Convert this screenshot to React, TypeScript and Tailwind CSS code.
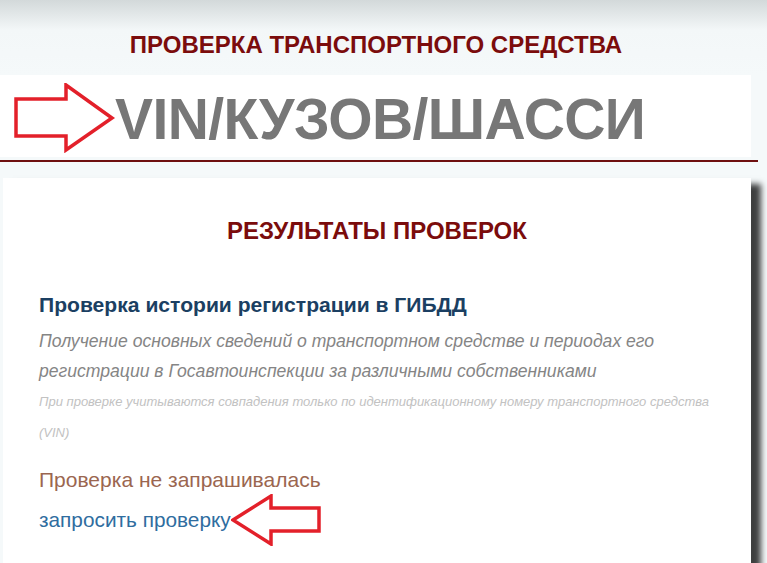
export default function App() {
  return (
    <div className="min-h-[563px] w-[767px] overflow-hidden bg-[#f5f9fa] font-['Liberation_Sans',Arial,sans-serif]">
      {/* шапка */}
      <div className="bg-gradient-to-b from-[#d3d9da] via-[#f3f7f8] via-40% to-[#f5f9fa] pt-[32px] pb-[18px] pr-[15px] text-center">
        <h1 className="text-[24px] font-bold leading-[25px] text-[#7b0c0c]">
          ПРОВЕРКА ТРАНСПОРТНОГО СРЕДСТВА
        </h1>
      </div>

      <div className="flex h-[82px] w-[751px] items-center bg-white">
        <svg width="118" height="70" viewBox="0 0 118 70" className="ml-[13px] mt-[4px] shrink-0">
          <polygon
            points="3,16 53,16 53,2 99,35 53,67 53,53 3,53"
            fill="none"
            stroke="#e3202a"
            strokeWidth="3.5"
            strokeLinejoin="miter"
          />
        </svg>
        <div className="-ml-[16px] mt-[6px] text-[57px] font-bold leading-none tracking-[-0.6px] text-[#777777]">
          VIN/КУЗОВ/ШАССИ
        </div>
      </div>
      <div className="mt-[3px] h-[2px] w-[758px] bg-[#6e1010]" />

      {/* карточка */}
      <div className="mt-[16px] ml-[3px] w-[748px] bg-white pb-[40px] shadow-[10px_6px_6px_rgba(0,0,0,0.75)]">
        <h2 className="pt-[40px] text-center text-[24px] font-bold leading-[26px] text-[#7b0c0c]">
          РЕЗУЛЬТАТЫ ПРОВЕРОК
        </h2>

        <div className="pl-[36px] pr-[20px] pt-[49px]">
          <h3 className="text-[21.1px] font-bold leading-[24px] text-[#1b3f62]">
            Проверка истории регистрации в ГИБДД
          </h3>
          <p className="mt-[9px] text-[17.6px] italic leading-[30px] text-[#858585]">
            Получение основных сведений о транспортном средстве и периодах его
            <br />
            регистрации в Госавтоинспекции за различными собственниками
          </p>
          <p className="whitespace-nowrap text-[13px] italic leading-[31px] text-[#c2c2c2]">
            При проверке учитываются совпадения только по идентификационному номеру транспортного средства
            <br />
            (VIN)
          </p>

          <div className="mt-[20px] text-[21px] leading-[24px] text-[#9b6650]">
            Проверка не запрашивалась
          </div>
          <div className="mt-[16px] flex h-[24px] items-center">
            <a href="#" className="text-[20.8px] leading-[24px] text-[#2f6d9f]">
              запросить проверку
            </a>
            <svg width="94" height="52" viewBox="0 0 94 52" className="-my-[14px] shrink-0">
              <polygon
                points="2,26 40,2 40,14 88,14 88,37 40,37 40,50"
                fill="none"
                stroke="#e3202a"
                strokeWidth="3.5"
              />
            </svg>
          </div>
        </div>
      </div>
    </div>
  );
}
